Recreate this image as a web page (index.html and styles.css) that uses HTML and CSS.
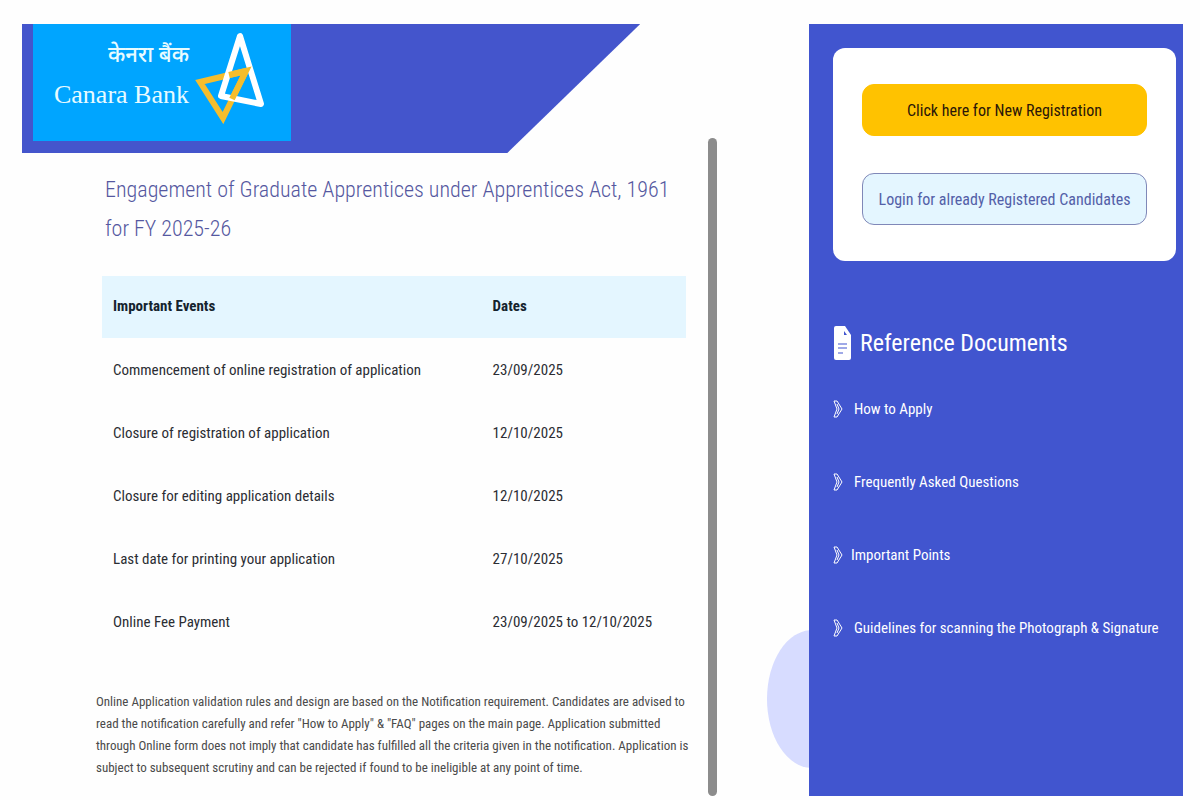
FILE: index.html
```
<!DOCTYPE html>
<html lang="en">
<head>
    <meta charset="UTF-8">
    <meta name="viewport" content="width=device-width, initial-scale=1.0">
    <title>Canara Bank - Graduate Apprentices</title>
    <link rel="stylesheet" href="styles.css">
</head>
<body>
    <div class="page">
        <main class="main">
            <div class="content">
                <header class="banner">
                    <div class="logo">
                        <div class="logo-text">
                            <span class="logo-hindi" lang="hi">केनरा बैंक</span>
                            <span class="logo-english">Canara Bank</span>
                        </div>
                        <svg class="logo-mark" viewBox="0 0 70 96" aria-hidden="true">
                            <path d="M5 54 L51 43 L28 90 Z" fill="none" stroke="#f5bd2c" stroke-width="6"/>
                            <path d="M45 8 L26 68 L66 76 Z" fill="none" stroke="#fff" stroke-width="6" stroke-linejoin="round"/>
                            <path d="M34 47 L51 43 L37 71" fill="none" stroke="#f5bd2c" stroke-width="6"/>
                        </svg>
                    </div>
                </header>

                <section class="notice">
                    <h1>Engagement of Graduate Apprentices under Apprentices Act, 1961 for FY 2025-26</h1>
                    <table class="events">
                        <thead>
                            <tr><th>Important Events</th><th>Dates</th></tr>
                        </thead>
                        <tbody>
                            <tr><td>Commencement of online registration of application</td><td>23/09/2025</td></tr>
                            <tr><td>Closure of registration of application</td><td>12/10/2025</td></tr>
                            <tr><td>Closure for editing application details</td><td>12/10/2025</td></tr>
                            <tr><td>Last date for printing your application</td><td>27/10/2025</td></tr>
                            <tr><td>Online Fee Payment</td><td>23/09/2025 to 12/10/2025</td></tr>
                        </tbody>
                    </table>
                    <p class="disclaimer">Online Application validation rules and design are based on the Notification requirement. Candidates are advised to read the notification carefully and refer "How to Apply" &amp; "FAQ" pages on the main page. Application submitted through Online form does not imply that candidate has fulfilled all the criteria given in the notification. Application is subject to subsequent scrutiny and can be rejected if found to be ineligible at any point of time.</p>
                </section>
            </div>
            <div class="scrollbar"></div>
            <div class="circle"></div>
        </main>

        <aside class="sidebar">
            <div class="card">
                <button class="btn btn-register" type="button">Click here for New Registration</button>
                <button class="btn btn-login" type="button">Login for already Registered Candidates</button>
            </div>

            <h2>
                <svg class="doc-icon" viewBox="0 0 17 34" aria-hidden="true">
                    <path d="M2 0 H11 L17 9 V32 Q17 34 15 34 H2 Q0 34 0 32 V2 Q0 0 2 0 Z" fill="#fff"/>
                    <path d="M10 5 L13 9 H10 Z" fill="#4155cf"/>
                    <path d="M4 18 H13 M4 22 H13 M4 27 H9" fill="none" stroke="#4155cf" stroke-width="1.2"/>
                </svg>
                Reference Documents
            </h2>
            <ul class="docs">
                <li><a href="#"><svg class="chevron" viewBox="0 0 10 18" aria-hidden="true"><path d="M1 1 L4 9 L1 17 M1 1 H4 L9 9 L4 17 H1 M4 4 L6 9 L4 14"/></svg>How to Apply</a></li>
                <li><a href="#"><svg class="chevron" viewBox="0 0 10 18" aria-hidden="true"><path d="M1 1 L4 9 L1 17 M1 1 H4 L9 9 L4 17 H1 M4 4 L6 9 L4 14"/></svg>Frequently Asked Questions</a></li>
                <li><a href="#" class="tight"><svg class="chevron" viewBox="0 0 10 18" aria-hidden="true"><path d="M1 1 L4 9 L1 17 M1 1 H4 L9 9 L4 17 H1 M4 4 L6 9 L4 14"/></svg>Important Points</a></li>
                <li><a href="#"><svg class="chevron" viewBox="0 0 10 18" aria-hidden="true"><path d="M1 1 L4 9 L1 17 M1 1 H4 L9 9 L4 17 H1 M4 4 L6 9 L4 14"/></svg>Guidelines for scanning the Photograph &amp; Signature</a></li>
            </ul>
        </aside>
    </div>
</body>
</html>
```
FILE: styles.css
```
* {
    box-sizing: border-box;
}
body {
    margin: 0;
    background: #fefefe;
    color: #2b2d33;
    font-family: "Roboto Condensed", Roboto, "Liberation Sans", sans-serif;
    font-size: 15px;
}
.page {
    display: flex;
    min-height: 100vh;
    padding: 24px 17px 4px 22px;
}
.main {
    position: relative;
    display: flex;
    flex: 1;
    padding-right: 92px;
    overflow: hidden;
}
.content {
    flex: 1;
}
.banner {
    width: 92%;
    height: 129px;
    padding-left: 11px;
    background: #4455cc;
    clip-path: polygon(0 0, 100% 0, 78.5% 100%, 0 100%);
}
.logo {
    display: flex;
    justify-content: flex-end;
    gap: 6px;
    width: 258px;
    height: 117px;
    padding: 4px 26px 0 0;
    background: #00a5ff;
    color: #e8fbff;
}
.logo-text {
    display: flex;
    flex-direction: column;
    align-items: flex-end;
    padding-top: 10px;
    white-space: nowrap;
}
.logo-hindi {
    font-family: "Noto Sans Devanagari", "Noto Sans", serif;
    font-size: 22px;
    font-weight: 500;
    line-height: 38px;
}
.logo-english {
    font-family: "Liberation Serif", serif;
    font-size: 26px;
    line-height: 38px;
}
.logo-mark {
    width: 70px;
    height: 96px;
}
.notice {
    padding: 17px 0 0 74px;
}
h1 {
    margin: 0 0 28px 9px;
    color: #5558a0;
    font-size: 22px;
    font-weight: 300;
    line-height: 39px;
}
.events {
    width: calc(100% - 14px);
    margin-left: 6px;
    border-collapse: collapse;
    table-layout: fixed;
}
.events th,
.events td {
    height: 63px;
    padding: 0 11px;
    text-align: left;
}
.events th {
    height: 62px;
    padding-bottom: 3px;
    background: #e4f6ff;
    color: #14232e;
}
.events th:first-child {
    width: 65%;
}
.disclaimer {
    margin: 38px 0 0;
    color: #4a4a4a;
    font-size: 13px;
    line-height: 22px;
}
.scrollbar {
    width: 9px;
    margin: 114px 0 0 14px;
    border-radius: 5px;
    background: #8c8c8c;
}
/* partly hidden behind the sidebar */
.circle {
    position: absolute;
    right: -48px;
    bottom: 28px;
    width: 90px;
    height: 138px;
    border-radius: 50%;
    background: #d7dcff;
}
.sidebar {
    width: 374px;
    padding: 24px 7px 24px 24px;
    background: #4155cf;
    color: #fff;
}
.card {
    display: flex;
    flex-direction: column;
    gap: 37px;
    padding: 36px 29px;
    border-radius: 12px;
    background: #fff;
}
.btn {
    height: 52px;
    padding: 0;
    border: 1px solid #ffc200;
    border-radius: 12px;
    font-family: inherit;
    font-size: 16px;
    font-weight: 400;
    cursor: pointer;
}
.btn-register {
    background: #ffc200;
    color: #2a1608;
}
.btn-login {
    border-color: #8088b8;
    background: #e4f6ff;
    color: #5360a8;
}
h2 {
    display: flex;
    align-items: center;
    gap: 9px;
    margin: 62px 0 34px;
    font-size: 24px;
    font-weight: 400;
    line-height: 40px;
}
.doc-icon {
    width: 17px;
    height: 34px;
    margin-left: 1px;
}
.docs {
    display: flex;
    flex-direction: column;
    gap: 49px;
    margin: 0;
    padding: 0;
    list-style: none;
}
.docs a {
    display: flex;
    align-items: center;
    gap: 11px;
    color: #fff;
    line-height: 24px;
    text-decoration: none;
    white-space: nowrap;
}
.docs .tight {
    gap: 8px;
}
.chevron {
    flex: none;
    width: 10px;
    height: 18px;
    fill: none;
    stroke: #fff;
    stroke-width: 1;
}
```
